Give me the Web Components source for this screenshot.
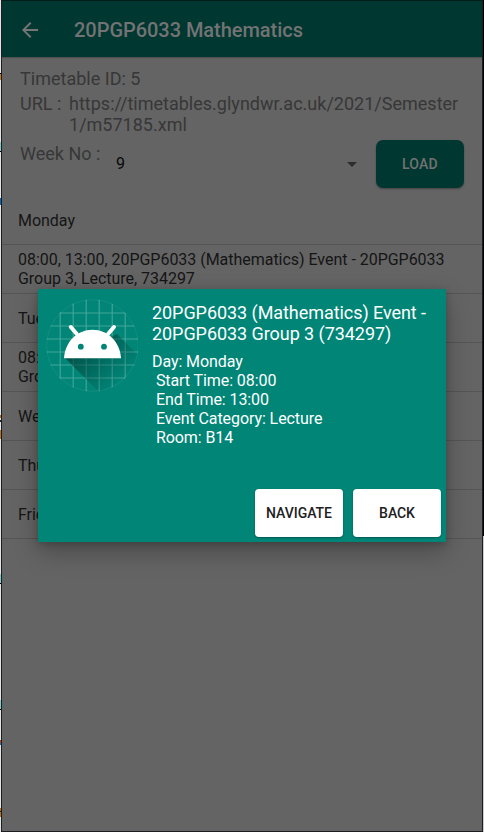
<!DOCTYPE html>
<html lang="en"><head><meta charset="utf-8"><title>Timetable</title>
<style>html,body{margin:0;width:484px;height:832px;overflow:hidden;background:#e4e4e4;font-family:Roboto,"Liberation Sans",sans-serif}</style></head><body>
<timetable-screen></timetable-screen>
<script>
const define=(name,html)=>customElements.define(name,class extends HTMLElement{
 constructor(){super();this.attachShadow({mode:'open'}).innerHTML=html;}
});
define('app-bar',`<style>:host{display:flex;align-items:center;box-sizing:border-box;height:57px;padding:1px 0 0 16px;background:#003731;border-top:1px solid #001d1a;color:#737373;font:500 20px/24px Roboto,sans-serif;box-shadow:0 1px 1px #0003}svg{width:24px;height:24px;margin-right:32px}span{letter-spacing:-.04px;padding-top:1px}</style>
<svg viewBox="0 0 24 24"><path fill="#757575" d="M20 11H7.8l5.6-5.6L12 4l-8 8 8 8 1.4-1.4L7.8 13H20z"/></svg><span><slot></slot></span>`);
define('action-button',`<style>:host{display:flex;box-sizing:border-box;width:88px;height:48px;align-items:center;justify-content:center;border-radius:var(--radius,4px);background:var(--bg,#fff);color:var(--fg,#212121);font:500 14px/20px Roboto,sans-serif;box-shadow:0 1px 2px #0005;letter-spacing:var(--ls,-.05px)}</style><slot></slot>`);
define('week-picker',`<style>:host{display:flex;align-items:center;width:241px;height:48px;color:#080808;font:16px/20px Roboto,sans-serif}svg{margin-left:auto}</style><slot></slot><svg width="10" height="5"><path d="M0 0h10L5 5z" fill="#2c2c2c"/></svg>`);
define('timetable-info',`<style>:host{display:block;box-sizing:border-box;height:139px;padding:11px 18px 0 18px;font:18px/21px Roboto,sans-serif;color:#373737}.t{letter-spacing:.01px}.u{display:grid;grid-template-columns:49px 1fr;margin-top:4px;letter-spacing:.01px;white-space:nowrap}.w{display:flex;margin-top:5px}.w .l{width:96px;padding-top:3px;letter-spacing:.01px}action-button{--bg:#003731;--fg:#727272;--radius:7px;--ls:.25px;margin-left:auto}</style>
<div class="t">Timetable ID: 5</div><div class="u"><span>URL :</span><span>https://timetables.glyndwr.ac.uk/2021/Semester<br>1/m57185.xml</span></div>
<div class="w"><span class="l">Week No :</span><week-picker>9</week-picker><action-button>LOAD</action-button></div>`);
define('day-row',`<style>:host{display:flex;align-items:center;box-sizing:border-box;height:49px;padding-left:16px;border-bottom:1px solid #555;color:#151515;font:16px/19px Roboto,sans-serif;letter-spacing:-.03px;white-space:nowrap}</style><span><slot></slot></span>`);
define('app-icon',`<style>:host{display:block;width:92px;height:94px}svg{display:block}</style>
<svg width="92" height="94" viewBox="46 298 92 94"><defs><clipPath id="c"><circle cx="92.5" cy="345.5" r="46.2"/></clipPath><linearGradient id="g" gradientUnits="userSpaceOnUse" x1="80" y1="350" x2="116" y2="386"><stop stop-color="#003c35" stop-opacity=".65"/><stop offset="1" stop-color="#003c35" stop-opacity="0"/></linearGradient></defs>
<g clip-path="url(#c)"><g stroke="#fff" stroke-opacity=".27" stroke-width="1.1" fill="none"><path d="M60.2 299v94M73.2 299v94M86.2 299v94M99.2 299v94M112.2 299v94M125.2 299v94M46 313h93M46 326h93M46 339h93M46 352h93M46 365h93M46 378h93"/></g><path d="M65 358L99 392h40V356l-22-22z" fill="url(#g)"/></g><circle cx="92.5" cy="345.5" r="45.8" fill="none" stroke="#fff" stroke-opacity=".07"/>
<path d="M70.8 327l6 7M114 327l-6 7" stroke="#fff" stroke-width="4" stroke-linecap="round"/><path d="M64 358.2C65 342 77 329.8 92.5 329.8S120 342 121 358.2z" fill="#fff"/><circle cx="80.8" cy="346.7" r="2.9" fill="#008577"/><circle cx="104" cy="346.7" r="2.9" fill="#008577"/></svg>`);
define('event-dialog',`<style>:host{display:flex;flex-direction:column;box-sizing:border-box;width:408px;height:253px;padding:9px 5px 5px 8px;background:#008577;border-radius:1px;color:#fff;font:16px/19px Roboto,sans-serif;letter-spacing:-.08px;box-shadow:0 10px 24px #0004,0 2px 7px #0003}.b{display:flex;gap:14px}h1{font:18px/21px Roboto,sans-serif;letter-spacing:-.06px;margin:4px 0 8px;white-space:nowrap}.d{white-space:pre}.f{display:flex;gap:10px;justify-content:flex-end;margin-top:auto}</style>
<div class="b"><app-icon></app-icon><div><h1><slot name="title"></slot></h1><div class="d"><slot></slot></div></div></div><div class="f"><action-button>NAVIGATE</action-button><action-button>BACK</action-button></div>`);
define('desktop-edge',`<style>:host{display:block;width:1px;height:832px;background:var(--edge)}</style>`);
define('timetable-screen',`<style>:host{display:grid;grid-template-columns:1px 482px 1px;position:relative;width:484px;height:832px}
.l{--edge:linear-gradient(#0000 73px,#000 73px 74px,#c47a1d 74px 80px,#0000 80px 142px,#83cfcf 142px 151px,#000 151px 152px,#0000 152px 198px,#0867b8 198px 205px,#0000 205px 415px,#b66e17 415px 418px,#0000 418px 420px,#222 420px 422px,#0000 422px 430px,#bd7416 430px 439px,#0000 439px 574px,#83cfcf 574px 583px,#000 583px 584px,#0000 584px 700px,#83cfcf 700px 709px,#000 709px 710px,#0000 710px 740px,#b64b18 740px 743px,#2472b8 743px 745px,#0000 745px 808px,#bd7416 808px 811px,#222 811px 812px,#bd7416 812px 817px,#0000 817px)}.r{--edge:linear-gradient(#000 536px,#ccc 536px)}
main{box-sizing:border-box;border:solid #1b1d20;border-width:0 1px 1px;background:#646464;height:832px;overflow:hidden}event-dialog{position:absolute;left:38px;top:289px}</style>
<desktop-edge class="l"></desktop-edge><main><app-bar>20PGP6033 Mathematics</app-bar><timetable-info></timetable-info>
<day-row>Monday</day-row><day-row>08:00, 13:00, 20PGP6033 (Mathematics) Event - 20PGP6033<br>Group 3, Lecture, 734297</day-row><day-row>Tuesday</day-row><day-row>08:00, 13:00<br>Group 3</day-row><day-row>Wednesday</day-row><day-row>Thursday</day-row><day-row>Friday</day-row></main><desktop-edge class="r"></desktop-edge>
<event-dialog><span slot="title">20PGP6033 (Mathematics) Event -<br>20PGP6033 Group 3 (734297)</span>Day: Monday
 Start Time: 08:00
 End Time: 13:00
 Event Category: Lecture
 Room: B14</event-dialog>`);
</script></body></html>
